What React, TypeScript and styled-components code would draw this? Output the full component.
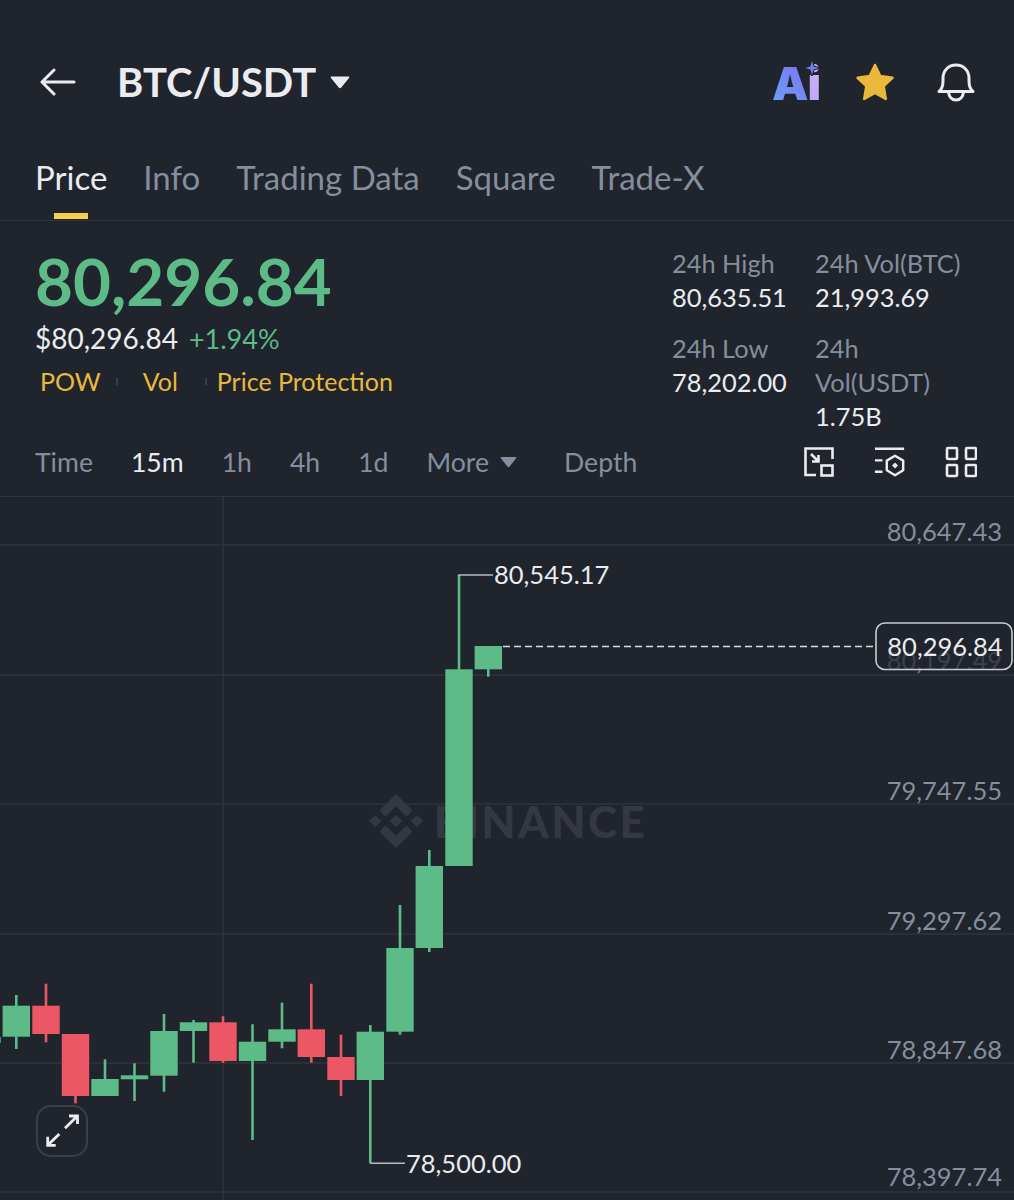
import React from 'react';
import styled, { createGlobalStyle } from 'styled-components';

const GlobalStyle = createGlobalStyle`
  html, body {
    margin: 0;
    padding: 0;
    background: #20242d;
  }
  * {
    box-sizing: border-box;
  }
`;

const FONT = `Lato, "Open Sans", "Liberation Sans", sans-serif`;
const GREEN = '#5cbb87';
const RED = '#ec5766';
const GRID = '#2f343d';

const Page = styled.div`
  width: 1014px;
  height: 1200px;
  overflow: hidden;
  background: #20242d;
  color: #eaecef;
  font-family: ${FONT};
`;

const Header = styled.header`
  height: 130px;
  margin-top: 17px;
  padding: 0 38px 0 40px;
  display: flex;
  align-items: center;
`;

const BackIcon = styled.svg`
  width: 36px;
  height: 28px;
  margin-right: 41px;
`;

const Pair = styled.h1`
  margin: 0;
  font-size: 40px;
  font-weight: 700;
  color: #eaecef;
`;

const PairCaret = styled.svg`
  width: 22px;
  height: 14px;
  margin-left: 13px;
`;

const HeaderActions = styled.div`
  margin-left: auto;
  display: flex;
  align-items: center;
  gap: 41px;
`;

const AiBadge = styled.div`
  position: relative;
  display: flex;
  width: 46px;
  height: 42px;
  margin-right: -4px;
  font-family: Inter, ${FONT};
  font-size: 46px;
  line-height: 48px;
  font-weight: 900;
  letter-spacing: -1px;
`;

const AiLetter = styled.span<{ $from: string; $to: string }>`
  display: block;
  margin-top: -2px;
  background: linear-gradient(45deg, ${(p) => p.$from}, ${(p) => p.$to});
  -webkit-background-clip: text;
  background-clip: text;
  color: transparent;
`;

const Sparkle = styled.svg`
  position: absolute;
  top: -1px;
  left: 32px;
  width: 16px;
  height: 16px;
`;

const HeaderIcon = styled.svg`
  width: 40px;
  height: 40px;
`;

const Tabs = styled.nav`
  height: 74px;
  padding-left: 35px;
  display: flex;
  gap: 36px;
  border-bottom: 1px solid ${GRID};
`;

const Tab = styled.div`
  display: flex;
  flex-direction: column;
  align-items: center;
`;

const TabLabel = styled.span<{ $active?: boolean }>`
  height: 60px;
  line-height: 60px;
  font-size: 33px;
  color: ${(p) => (p.$active ? '#eaecef' : '#848e9c')};
`;

const TabMark = styled.span`
  width: 34px;
  height: 6px;
  margin-top: 6px;
  background: #f3d04e;
`;

const Stats = styled.section`
  height: 209px;
  padding: 25px 35px 0 35px;
  display: flex;
  justify-content: space-between;
`;

const Quote = styled.div`
  display: flex;
  flex-direction: column;
`;

const LastPrice = styled.div`
  font-size: 65.5px;
  line-height: 70px;
  font-weight: 700;
  color: ${GREEN};
`;

const SubLine = styled.div`
  margin-top: 2px;
  display: flex;
  align-items: baseline;
  gap: 11px;
  font-size: 28px;
  line-height: 40px;
`;

const Change = styled.span`
  font-size: 27px;
  color: ${GREEN};
`;

const TagRow = styled.div`
  margin-top: 2px;
  padding-left: 5px;
  height: 40px;
  display: flex;
  align-items: center;
  font-size: 25px;
  color: #e9b93c;
`;

const TagSep = styled.span<{ $before: number; $after: number }>`
  width: 2px;
  height: 7px;
  margin: 0 ${(p) => p.$after}px 0 ${(p) => p.$before}px;
  background: #3a3f49;
`;

const Figures = styled.div`
  display: grid;
  grid-template-columns: 143px 164px;
  row-gap: 17px;
  align-content: start;
`;

const Figure = styled.div`
  display: flex;
  flex-direction: column;
  font-size: 25.4px;
  line-height: 34px;
`;

const FigureLabel = styled.span`
  color: #848e9c;
`;

const FigureValue = styled.span`
  color: #eaecef;
`;

const Intervals = styled.div`
  height: 67px;
  padding: 0 37px 2px 35px;
  display: flex;
  align-items: center;
  gap: 38px;
  font-size: 26.6px;
  color: #848e9c;
  border-bottom: 1px solid ${GRID};
`;

const Interval = styled.span<{ $active?: boolean }>`
  color: ${(p) => (p.$active ? '#eaecef' : '#848e9c')};
`;

const MoreInterval = styled.span`
  display: flex;
  align-items: center;
  gap: 11px;
  margin-right: 9px;
`;

const MoreCaret = styled.svg`
  width: 17px;
  height: 12px;
`;

const ChartTools = styled.div`
  margin-left: auto;
  display: flex;
  align-items: center;
  gap: 39px;
`;

const ToolIcon = styled.svg`
  width: 32px;
  height: 32px;
  color: #eaecef;
`;

const Chart = styled.div`
  position: relative;
  height: 703px;
  overflow: hidden;
`;

const ChartCanvas = styled.svg`
  display: block;
  width: 1014px;
  height: 703px;
`;

const AxisLabel = styled.text`
  font-family: ${FONT};
  font-size: 25.5px;
  fill: #848e9c;
  text-anchor: end;
  dominant-baseline: central;
`;

const ExtremeLabel = styled.text`
  font-family: ${FONT};
  font-size: 25.5px;
  fill: #eaecef;
  dominant-baseline: central;
`;

const TagLabel = styled(ExtremeLabel)`
  text-anchor: middle;
`;

const Watermark = styled.text`
  font-family: ${FONT};
  font-size: 44px;
  font-weight: 900;
  letter-spacing: 2.5px;
  fill: #343842;
  dominant-baseline: central;
`;

const ExpandButton = styled.button`
  position: absolute;
  left: 36px;
  top: 608px;
  width: 52px;
  height: 52px;
  padding: 0;
  background: transparent;
  border: 2px solid #3a3f49;
  border-radius: 15px;
`;

const ExpandIcon = styled.svg`
  display: block;
  width: 48px;
  height: 48px;
`;

type Candle = {
  x: number;
  top: number;
  bottom: number;
  high: number;
  low: number;
  up: boolean;
};

const CANDLES: Candle[] = [
  { x: -13, top: 1037, bottom: 1043, high: 1037, low: 1043, up: true },
  { x: 16.3, top: 1005.7, bottom: 1036.7, high: 995, low: 1049, up: true },
  { x: 46, top: 1005.7, bottom: 1034, high: 983.7, low: 1042.3, up: false },
  { x: 75.5, top: 1034, bottom: 1096, high: 1034, low: 1103.3, up: false },
  { x: 105, top: 1079, bottom: 1096, high: 1059.3, low: 1096, up: true },
  { x: 134.5, top: 1075.3, bottom: 1079.3, high: 1063.3, low: 1101, up: true },
  { x: 164, top: 1031, bottom: 1075.7, high: 1014, low: 1091.7, up: true },
  { x: 193.5, top: 1022.3, bottom: 1031, high: 1020, low: 1062.7, up: true },
  { x: 223, top: 1022.3, bottom: 1061, high: 1016.3, low: 1062.7, up: false },
  { x: 252.5, top: 1041.7, bottom: 1061, high: 1024.3, low: 1140, up: true },
  { x: 282, top: 1029.3, bottom: 1041.7, high: 1002.7, low: 1048.3, up: true },
  { x: 311.3, top: 1029.3, bottom: 1057, high: 983.7, low: 1062.7, up: false },
  { x: 341, top: 1057, bottom: 1080, high: 1034.7, low: 1096, up: false },
  { x: 370.3, top: 1031.7, bottom: 1080, high: 1025, low: 1163.3, up: true },
  { x: 400, top: 948, bottom: 1031.7, high: 905, low: 1034.7, up: true },
  { x: 429.3, top: 866, bottom: 948, high: 850, low: 952, up: true },
  { x: 459, top: 669.3, bottom: 866, high: 575, low: 866, up: true },
  { x: 488.3, top: 646, bottom: 669.3, high: 646, low: 676.7, up: true },
];

const AXIS = [
  { y: 531, price: '80,647.43' },
  { y: 660, price: '80,197.49' },
  { y: 790, price: '79,747.55' },
  { y: 920, price: '79,297.62' },
  { y: 1049, price: '78,847.68' },
  { y: 1176, price: '78,397.74' },
];

const GRID_LINES = [545, 675, 804, 934, 1063, 1192];

const BINANCE_LOGO =
  'M38.73 53.2L63.3 28.63l24.59 24.58 14.3-14.3L63.3 0 24.42 38.89zM0 63.31l14.3-14.3 14.3 14.3-14.3 14.3zM38.73 73.41L63.3 97.98l24.59-24.58 14.3 14.29-.01.01L63.3 126.61l-38.88-38.9-.02-.02zM98.3 63.31l14.3-14.3 14.3 14.3-14.3 14.3zM77.83 63.3L63.3 48.76 52.56 59.5l-1.24 1.24-2.54 2.54 14.52 14.53 14.52-14.52z';

const CandleChart = () => (
  <ChartCanvas viewBox="0 497 1014 703">
    {GRID_LINES.map((y) => (
      <line key={y} x1={0} x2={1014} y1={y} y2={y} stroke={GRID} strokeWidth={1.4} />
    ))}
    <line x1={223} x2={223} y1={497} y2={1200} stroke={GRID} strokeWidth={1.4} />

    <path d={BINANCE_LOGO} fill="#343842" transform="translate(369 794) scale(0.4265)" />
    <Watermark x={434} y={821}>BINANCE</Watermark>

    {CANDLES.map((c) => (
      <g key={c.x} fill={c.up ? GREEN : RED}>
        <rect x={c.x - 1.3} y={c.high} width={2.6} height={c.low - c.high} />
        <rect x={c.x - 13.7} y={c.top} width={27.4} height={c.bottom - c.top} />
      </g>
    ))}

    {AXIS.map((a) => (
      <AxisLabel key={a.y} x={1002} y={a.y}>{a.price}</AxisLabel>
    ))}

    {/* high / low callouts */}
    <path d="M459 576 V575 H493" fill="none" stroke="#b7bbc2" strokeWidth={1.6} />
    <ExtremeLabel x={494} y={574}>80,545.17</ExtremeLabel>
    <path d="M370.3 1163.3 H405" fill="none" stroke="#b7bbc2" strokeWidth={1.6} />
    <ExtremeLabel x={406} y={1163}>78,500.00</ExtremeLabel>

    {/* last price */}
    <line x1={503} x2={876} y1={646.5} y2={646.5} stroke="#d8dbe0" strokeWidth={1.4} strokeDasharray="7 4" />
    <rect x={876} y={623} width={136} height={46.5} rx={9} fill="#20242d" fillOpacity={0.72} stroke="#c9ccd2" strokeWidth={1.6} />
    <TagLabel x={945} y={646}>80,296.84</TagLabel>
  </ChartCanvas>
);

export default function App() {
  return (
    <>
      <GlobalStyle />
      <Page>
        <Header>
          <BackIcon viewBox="0 0 36 28" fill="none" stroke="#eaecef" strokeWidth={3} strokeLinecap="round" strokeLinejoin="round">
            <path d="M34 14 H2 M14 2 L2 14 L14 26" />
          </BackIcon>
          <Pair>BTC/USDT</Pair>
          <PairCaret viewBox="0 0 22 14" fill="#eaecef">
            <path d="M2.5 1.5 H19.5 Q21 1.5 20 3 L12.3 12.5 Q11 14 9.7 12.5 L2 3 Q1 1.5 2.5 1.5 Z" />
          </PairCaret>
          <HeaderActions>
            <AiBadge>
              <AiLetter $from="#6f9ff8" $to="#7a70f0">A</AiLetter>
              <AiLetter $from="#b9a6f6" $to="#d5b4f4">i</AiLetter>
              <Sparkle viewBox="0 0 16 16" fill="#6f80ee" stroke="#20242d" strokeWidth={2} paintOrder="stroke">
                <path d="M8 1 L9.6 6.4 L15 8 L9.6 9.6 L8 15 L6.4 9.6 L1 8 L6.4 6.4 Z" />
              </Sparkle>
            </AiBadge>
            <HeaderIcon viewBox="0 0 40 40" fill="#eab83a" stroke="#eab83a" strokeWidth={2.5} strokeLinejoin="round">
              <path d="M20 3 L25.3 14 L37.5 15.8 L28.7 24.2 L30.8 37 L20 31 L9.2 37 L11.3 24.2 L2.5 15.8 L14.7 14 Z" />
            </HeaderIcon>
            <HeaderIcon viewBox="0 0 40 40" fill="none" stroke="#eaecef" strokeWidth={3} strokeLinecap="round" strokeLinejoin="round">
              <path d="M3 29.5 C6 27 7 24 7 19 V16 C7 8.5 12.5 3 20 3 C27.5 3 33 8.5 33 16 V19 C33 24 34 27 37 29.5 Z" />
              <path d="M12.5 30 C13 35 16 38 20 38 C24 38 27 35 27.5 30" />
            </HeaderIcon>
          </HeaderActions>
        </Header>

        <Tabs>
          <Tab>
            <TabLabel $active>Price</TabLabel>
            <TabMark />
          </Tab>
          <Tab><TabLabel>Info</TabLabel></Tab>
          <Tab><TabLabel>Trading Data</TabLabel></Tab>
          <Tab><TabLabel>Square</TabLabel></Tab>
          <Tab><TabLabel>Trade-X</TabLabel></Tab>
        </Tabs>

        <Stats>
          <Quote>
            <LastPrice>80,296.84</LastPrice>
            <SubLine>
              <span>$80,296.84</span>
              <Change>+1.94%</Change>
            </SubLine>
            <TagRow>
              <span>POW</span>
              <TagSep $before={15} $after={25} />
              <span>Vol</span>
              <TagSep $before={27} $after={10} />
              <span>Price Protection</span>
            </TagRow>
          </Quote>
          <Figures>
            <Figure>
              <FigureLabel>24h High</FigureLabel>
              <FigureValue>80,635.51</FigureValue>
            </Figure>
            <Figure>
              <FigureLabel>24h Vol(BTC)</FigureLabel>
              <FigureValue>21,993.69</FigureValue>
            </Figure>
            <Figure>
              <FigureLabel>24h Low</FigureLabel>
              <FigureValue>78,202.00</FigureValue>
            </Figure>
            <Figure>
              <FigureLabel>24h Vol(USDT)</FigureLabel>
              <FigureValue>1.75B</FigureValue>
            </Figure>
          </Figures>
        </Stats>

        <Intervals>
          <Interval>Time</Interval>
          <Interval $active>15m</Interval>
          <Interval>1h</Interval>
          <Interval>4h</Interval>
          <Interval>1d</Interval>
          <MoreInterval>
            More
            <MoreCaret viewBox="0 0 17 12" fill="#848e9c">
              <path d="M1.5 1 H15.5 Q17 1 16 2.4 L9.6 10.6 Q8.5 12 7.4 10.6 L1 2.4 Q0 1 1.5 1 Z" />
            </MoreCaret>
          </MoreInterval>
          <Interval>Depth</Interval>
          <ChartTools>
            <ToolIcon viewBox="0 0 32 32" fill="none" stroke="currentColor" strokeWidth={2.6}>
              <path d="M13 29 H2.5 V2.5 H29.5 V13" />
              <rect x={18.5} y={19.5} width={11} height={10} />
              <path d="M8 8 L15 15 M15.5 9 V15.5 H9" />
            </ToolIcon>
            <ToolIcon viewBox="0 0 34 34" fill="none" stroke="currentColor" strokeWidth={2.6}>
              <path d="M1 3 H32 M1 15.3 H9 M1 27.3 H9" />
              <path d="M22.3 10.4 L31 15.5 V25.8 L22.3 31 L13.6 25.8 V15.5 Z" strokeLinejoin="round" />
              <path d="M22.3 17.5 L25.5 20.7 L22.3 23.9 L19.1 20.7 Z" fill="currentColor" stroke="none" />
            </ToolIcon>
            <ToolIcon viewBox="0 0 32 32" fill="none" stroke="currentColor" strokeWidth={2.6} strokeLinejoin="round">
              <rect x={2} y={2} width={10} height={11} rx={1} />
              <rect x={21} y={2} width={10} height={11} rx={1} />
              <rect x={2} y={19} width={10} height={11} rx={1} />
              <rect x={21} y={19} width={10} height={11} rx={1} />
            </ToolIcon>
          </ChartTools>
        </Intervals>

        <Chart>
          <CandleChart />
          <ExpandButton aria-label="Expand chart">
            <ExpandIcon viewBox="2 2 48 48" fill="none" stroke="#eaecef" strokeWidth={2.8}>
              <path d="M29 23.3 L41.3 11 M33 11 H41.5 V19" />
              <path d="M23.3 29 L11.7 40.3 M11.7 31.7 V40.3 H19.7" />
            </ExpandIcon>
          </ExpandButton>
        </Chart>
      </Page>
    </>
  );
}
